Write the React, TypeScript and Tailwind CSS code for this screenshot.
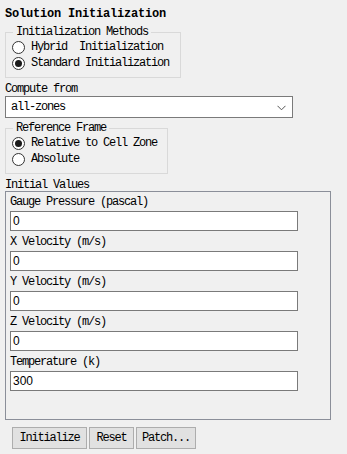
import React from "react";

const mono = "font-['Liberation_Mono',monospace] text-[12px] tracking-[-1.2px] leading-[14px] text-black";

function Radio({ checked, label }: { checked?: boolean; label: string }) {
  return (
    <div className="flex items-center h-[16px] pl-[6px]">
      <div className="w-[13px] h-[13px] rounded-full border border-[#333333] bg-white flex items-center justify-center">
        {checked && <div className="w-[7px] h-[7px] rounded-full bg-[#1a1a1a]" />}
      </div>
      <span className={`${mono} ml-[6px] whitespace-pre`}>{label}</span>
    </div>
  );
}

function Field({ label, value, first }: { label: string; value: string; first?: boolean }) {
  return (
    <div className="flex flex-col">
      <div className={`${mono} ${first ? "pt-[3px] h-[19px]" : "pt-[4px] h-[20px]"} whitespace-pre`}>{label}</div>
      <div className="w-[288px] h-[20px] border border-[#7a7a7a] bg-white flex items-center pl-[2px] font-['Liberation_Sans',Arial,sans-serif] text-[12px] text-black">
        {value}
      </div>
    </div>
  );
}

export default function App() {
  return (
    <div className="w-[347px] h-[454px] bg-[#f0f0f0] flex flex-col overflow-hidden">
      <div className="pt-[7px] pl-[5px] h-[25px]">
        <div className="font-['Liberation_Mono',monospace] text-[12px] font-bold tracking-[-0.2px] leading-[14px] text-black">
          Solution Initialization
        </div>
      </div>
      <fieldset className="ml-[5px] w-[176px] border border-[#d9d9d9] pb-[6px]">
        <legend className={`${mono} ml-[7px] px-[3px]`}>Initialization Methods</legend>
        <Radio label="Hybrid  Initialization" />
        <Radio checked label="Standard Initialization" />
      </fieldset>
      <div className={`${mono} ml-[5px] mt-[4px]`}>Compute from</div>
      <div className="ml-[5px] w-[288px] h-[22px] border border-[#7a7a7a] bg-white flex items-center justify-between pl-[5px] pr-[6px]">
        <span className={mono}>all-zones</span>
        <svg width="9" height="6" viewBox="0 0 9 6" className="mt-[1px]">
          <path d="M0.5 0.8 L4.5 4.8 L8.5 0.8" fill="none" stroke="#555555" strokeWidth="1" />
        </svg>
      </div>
      <fieldset className="ml-[5px] mt-[3px] w-[163px] border border-[#d9d9d9] pb-[6px]">
        <legend className={`${mono} ml-[7px] px-[3px]`}>Reference Frame</legend>
        <Radio checked label="Relative to Cell Zone" />
        <Radio label="Absolute" />
      </fieldset>
      <div className={`${mono} !leading-[12px] ml-[5px] mt-[5px]`}>Initial Values</div>
      <div className="ml-[5px] w-[326px] h-[229px] border border-[#8b8f99] pl-[4px] flex flex-col">
        <Field first label="Gauge Pressure (pascal)" value="0" />
        <Field label="X Velocity (m/s)" value="0" />
        <Field label="Y Velocity (m/s)" value="0" />
        <Field label="Z Velocity (m/s)" value="0" />
        <Field label="Temperature (k)" value="300" />
      </div>
      <div className="flex gap-[2px] ml-[12px] mt-[7px]">
        <button className={`${mono} w-[75px] h-[22px] bg-[#e1e1e1] border border-[#adadad] flex items-center justify-center`}>Initialize</button>
        <button className={`${mono} w-[45px] h-[22px] bg-[#e1e1e1] border border-[#adadad] flex items-center justify-center`}>Reset</button>
        <button className={`${mono} w-[60px] h-[22px] bg-[#e1e1e1] border border-[#adadad] flex items-center justify-center`}>Patch...</button>
      </div>
    </div>
  );
}
